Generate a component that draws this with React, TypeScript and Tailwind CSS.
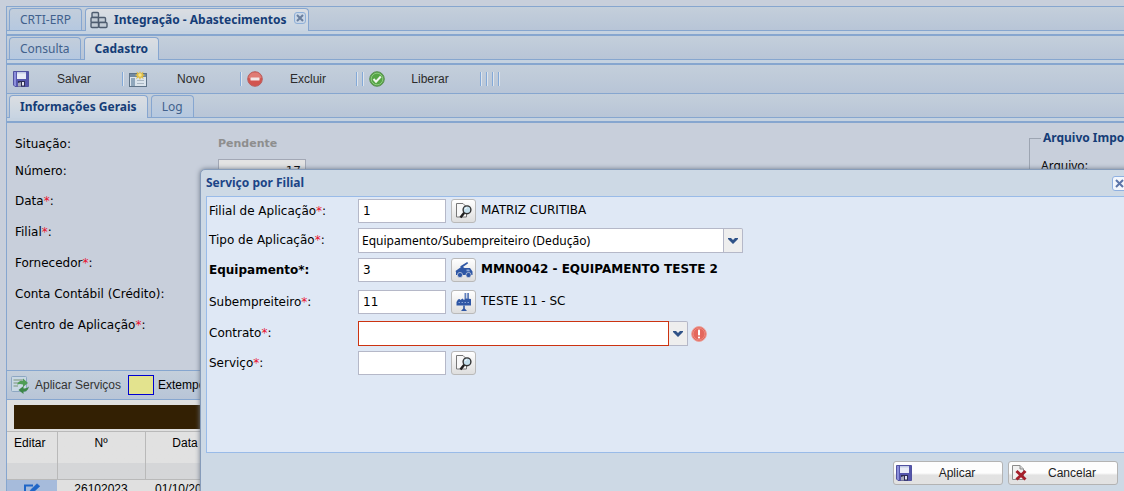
import type { ReactNode } from 'react'

const ui = "font-['Noto_Sans',sans-serif] text-[12px] leading-4"
const form = "font-['DejaVu_Sans',sans-serif] text-[12px] leading-4"
const arial = "font-['Liberation_Sans',sans-serif] text-[12px] leading-4"

function SaveIcon() {
  return (
    <svg width="16" height="16" viewBox="0 0 16 16" className="shrink-0">
      <path d="M0.5 0.5H15.5V15.5H2L0.5 14Z" fill="#5556ac" stroke="#5152a0" />
      <path d="M1 1H3V15H2L1 14Z" fill="#8c8fdb" />
      <rect x="4" y="1" width="9" height="7" fill="#e9ecf7" />
      <rect x="4" y="1" width="9" height="1.5" fill="#c3cbe6" />
      <rect x="5" y="10" width="7" height="5.5" fill="#2c2c52" />
      <path d="M5 15.5V12L8 11V15.5Z" fill="#a5a7ba" />
      <rect x="9" y="11" width="2" height="3.5" fill="#e3e5f2" />
    </svg>
  )
}

function NewIcon() {
  return (
    <svg width="18" height="16" viewBox="0 0 18 16" className="shrink-0">
      <rect x="0.5" y="2.5" width="17" height="13" fill="#dbe4ec" stroke="#5f7387" />
      <rect x="1" y="3" width="16" height="3" fill="#7189a1" />
      <rect x="2" y="7" width="4" height="8" fill="#8fa6bb" />
      <path d="M8 9.5H15M8 12.5H15" stroke="#a9b6c2" />
      <path d="M11 0L12 2.2L14.5 0.6L13.8 3L16 4L13.8 5.2L14.6 8L12 6.6L11 9L9.8 6.6L7 8L8.1 5.2L6 4L8.2 3L7.4 0.6L10 2.2Z" fill="#e0bd45" />
      <circle cx="11" cy="4" r="1.7" fill="#f5e48c" />
    </svg>
  )
}

function DeleteIcon() {
  return (
    <svg width="16" height="16" viewBox="0 0 16 16" className="shrink-0">
      <circle cx="8" cy="8" r="7.3" fill="#d2544f" stroke="#b8605f" />
      <path d="M1.5 7A6.6 6.6 0 0 1 14.5 7Q8 9 1.5 7Z" fill="#e07b74" />
      <rect x="3.5" y="6.5" width="9" height="3" rx="0.5" fill="#f3e8e8" />
    </svg>
  )
}

function CheckIcon() {
  return (
    <svg width="16" height="16" viewBox="0 0 16 16" className="shrink-0">
      <circle cx="8" cy="8" r="7.3" fill="#55a545" stroke="#5d8f56" />
      <circle cx="8" cy="8" r="5.8" fill="none" stroke="#8cc97e" />
      <path d="M4.5 8L7 10.7L11.8 5.5" fill="none" stroke="#f0f5ee" strokeWidth="2" />
    </svg>
  )
}

function CancelIcon() {
  return (
    <svg width="16" height="16" viewBox="0 0 16 16" className="shrink-0">
      <path d="M1.5 0.5H9L12.5 4V14.5H1.5Z" fill="#f1f1f1" stroke="#8c8c8c" />
      <path d="M9 0.5V4H12.5" fill="#d5d5d5" stroke="#8c8c8c" />
      <path d="M5.5 6L14.5 14.5M14.5 6L5.5 14.5" stroke="#a51f2b" strokeWidth="3" />
    </svg>
  )
}

function SearchIcon() {
  return (
    <svg width="16" height="16" viewBox="0 0 16 16">
      <path d="M0.5 0.5H7L10.5 4V14H0.5Z" fill="#f8f8f8" stroke="#777" />
      <path d="M8.8 9L4.5 14.5" stroke="#1f1f1f" strokeWidth="2.4" />
      <circle cx="11" cy="6.8" r="3.9" fill="#c4dfec" stroke="#333" strokeWidth="1.4" />
      <path d="M9 6.2Q9.4 5 11 4.6" fill="none" stroke="#fff" />
    </svg>
  )
}

function TruckIcon() {
  return (
    <svg width="18" height="16" viewBox="0 0 18 16" fill="#2f57a5">
      <path d="M5 4.6L12.2 0L13.2 1.2L7.2 5.4Z" />
      <path d="M0.5 9L4 6.5L6 5H8L9.5 6H15L17.5 9.5V13H1V10Z" />
      <circle cx="5" cy="13" r="2.6" stroke="#eee" strokeWidth="0.6" />
      <circle cx="13.5" cy="13" r="2.6" stroke="#eee" strokeWidth="0.6" />
      <path d="M11.5 7.5H14.2L15 9.3H11.5Z" fill="#8ea9d8" />
    </svg>
  )
}

function FactoryIcon() {
  return (
    <svg width="16" height="18" viewBox="0 0 16 18" fill="#2f57a5">
      <path d="M8.5 0H10.3V7H8.5ZM11.2 0H13V7H11.2Z" opacity="0.75" />
      <path d="M0.5 9L2 6.5L3.5 6L4.5 7L6.5 5.6L8 7L10 5.6L15 6V12.5H0.5Z" />
      <path d="M2.5 9.5H14" stroke="#8ba5d6" strokeDasharray="1.5 1.5" />
      <path d="M7.2 12.5H8.8V15.5L11 18H5L7.2 15.5Z" />
    </svg>
  )
}

function ModuleIcon() {
  return (
    <svg width="18" height="18" viewBox="0 0 18 18" fill="#c3ccd6" stroke="#4e5c6f" strokeWidth="1.4" className="shrink-0">
      <rect x="2" y="1.5" width="6.5" height="5" rx="1" />
      <rect x="1" y="6.5" width="7.5" height="5" rx="1" />
      <rect x="8.5" y="6.5" width="7" height="5" rx="1" />
      <rect x="1" y="11.5" width="7.5" height="5" rx="1" />
      <rect x="9" y="11.5" width="8" height="5" rx="1" />
    </svg>
  )
}

function ApplyIcon() {
  return (
    <svg width="18" height="18" viewBox="0 0 18 18" className="shrink-0">
      <rect x="0.5" y="0.5" width="15" height="15" rx="1" fill="#c9d8e4" stroke="#8da7c2" />
      <path d="M2.5 4H13M2.5 7H8M2.5 10H7" stroke="#7a9478" />
      <path d="M6 8.5Q8 4 12 5V2.5L17 7L12 11V8.5Q9 7.5 6 8.5Z" fill="#4f9d55" />
      <path d="M18 10.5Q16.5 16 12.5 15.5V18L7.5 14L12.5 10V12.5Q15.5 13 18 10.5Z" fill="#3c8747" />
    </svg>
  )
}

function EditIcon() {
  return (
    <svg width="18" height="16" viewBox="0 0 18 16" fill="none" stroke="#1f66c7" strokeWidth="2">
      <path d="M10 2.5H2V14.5H14V9" />
      <path d="M6.5 10L7.5 7L14 0.8L16.8 3.2L10 9.5Z" fill="#1f66c7" strokeWidth="0.6" />
    </svg>
  )
}

function CloseBox({ label }: { label: string }) {
  return (
    <button aria-label={label} className="flex h-3 w-3 shrink-0 items-center justify-center rounded-[3px] border border-[#8fb0d8] bg-[#c9d6e6]">
      <svg width="8" height="8" viewBox="0 0 8 8" stroke="#6a7f9e" strokeWidth="2">
        <path d="M1 1L7 7M7 1L1 7" />
      </svg>
    </button>
  )
}

function Tab({ active, children }: { active?: boolean; children: ReactNode }) {
  return (
    <button
      role="tab"
      aria-selected={!!active}
      className={
        active
          ? 'relative -mb-px flex h-[23px] items-center rounded-t border border-b-0 border-[#86a6d0] bg-linear-to-b from-[#dbdee2] to-[#c7d4e2] px-[10px] font-bold text-[#153d77]'
          : 'flex h-[22px] items-center rounded-t border border-b-0 border-[#86a6d0] bg-linear-to-b from-[#c3cedb] to-[#b5c8e0] px-[10px] text-[#41618c]'
      }
    >
      {children}
    </button>
  )
}

function TabBar({ children }: { children: ReactNode }) {
  return (
    <div className="border-b-2 border-[#86a6cf] bg-[#c5d2e0] pb-[3px]">
      <div role="tablist" className={`${ui} flex h-6 items-end gap-[3px] border-b border-[#86a6cf] bg-linear-to-b from-[#c4cfdb] to-[#b8c5d7] pl-[2px]`}>
        {children}
      </div>
    </div>
  )
}

function ToolButton({ icon, wide, children }: { icon: ReactNode; wide?: boolean; children: ReactNode }) {
  return (
    <button className={`${wide ? 'w-28 pr-[2px]' : 'w-[110px]'} flex h-6 items-center pl-1 text-[#2b2b2b]`}>
      {icon}
      <span className="flex-1 text-center">{children}</span>
    </button>
  )
}

function Separator() {
  return <span className="mr-px ml-[3px] h-[14px] w-[2px] border-r border-l border-r-[#dfe5ec] border-l-[#83a9d8]" />
}

function Label({ text, required, htmlFor }: { text: string; required?: boolean; htmlFor?: string }) {
  return (
    <label htmlFor={htmlFor}>
      {text}
      {required && <span className="text-[#e8112d]">*</span>}:
    </label>
  )
}

const backFields = [
  { label: 'Data', required: true },
  { label: 'Filial', required: true },
  { label: 'Fornecedor', required: true },
  { label: 'Conta Contábil (Crédito)' },
  { label: 'Centro de Aplicação', required: true },
]

const fieldLabel = 'flex h-6 w-[149px] shrink-0 items-center'
const fieldInput = 'h-6 w-[88px] border border-[#b5b8c8] bg-white px-1 outline-none'

function IconButton({ label, children }: { label: string; children: ReactNode }) {
  return (
    <button
      aria-label={label}
      className="mx-[5px] flex h-6 w-[25px] items-center justify-center rounded-[3px] border border-[#b9b9b9] bg-linear-to-b from-white to-[#dedede]"
    >
      {children}
    </button>
  )
}

function Trigger() {
  return (
    <span className="flex h-full w-[19px] items-center justify-center rounded-tr-[2px] border border-l-0 border-[#b5b8c8] bg-[#eeeeee]">
      <svg width="10" height="6" viewBox="0 0 10 6">
        <path d="M0 0H3L5 2L7 0H10V1L5 6L0 1Z" fill="#2f5288" />
      </svg>
    </span>
  )
}

function FooterButton({ icon, children }: { icon: ReactNode; children: ReactNode }) {
  return (
    <button className="flex h-6 w-[110px] items-center rounded-[3px] border border-[#b3b3b3] bg-linear-to-b from-[#fdfdfd] from-50% to-[#e2e2e2] to-60% pl-[2px] text-[#222]">
      {icon}
      <span className="flex-1 text-center">{children}</span>
    </button>
  )
}

function ServiceDialog() {
  return (
    <div
      role="dialog"
      aria-labelledby="dialog-title"
      className="absolute top-[169px] -right-[10px] left-[200px] rounded-t-[5px] border border-[#869cba] bg-[#cdd9e5] px-[5px] pb-2 text-black shadow-[0_0_5px_#6c7788]"
    >
      <div className="flex h-[26px] items-center justify-between pr-px">
        <h2 id="dialog-title" className="font-bold text-[#1c4587]">Serviço por Filial</h2>
        <button aria-label="Fechar" className="flex h-[15px] w-[15px] items-center justify-center rounded-[3px] border border-[#8fb0e0] bg-[#f2f6fc]">
          <svg width="9" height="9" viewBox="0 0 9 9" stroke="#5b74a8" strokeWidth="2">
            <path d="M1 1L8 8M8 1L1 8" />
          </svg>
        </button>
      </div>

      <form className={`${form} border border-[#99bbe8] bg-[#dfe8f5] px-[2px] pt-[2px] pb-[71px]`}>
        <div className="flex h-[29px]">
          <div className={fieldLabel}><Label text="Filial de Aplicação" required htmlFor="filial" /></div>
          <input id="filial" className={fieldInput} defaultValue="1" />
          <IconButton label="Pesquisar filial"><SearchIcon /></IconButton>
          <span className="pt-[3px]">MATRIZ CURITIBA</span>
        </div>
        <div className="flex h-[30px]">
          <div className={fieldLabel}><Label text="Tipo de Aplicação" required htmlFor="tipo" /></div>
          <div className="flex h-[25px]">
            <select id="tipo" className={`${ui} w-[366px] appearance-none border border-[#b5b8c8] bg-white px-[3px] outline-none`}>
              <option>Equipamento/Subempreiteiro (Dedução)</option>
            </select>
            <Trigger />
          </div>
        </div>
        <div className="flex h-8 font-bold">
          <div className={fieldLabel}><label htmlFor="equipamento">Equipamento*:</label></div>
          <input id="equipamento" className={`${fieldInput} font-normal`} defaultValue="3" />
          <IconButton label="Pesquisar equipamento"><TruckIcon /></IconButton>
          <span className="pt-[3px]">MMN0042 - EQUIPAMENTO TESTE 2</span>
        </div>
        <div className="flex h-[31px]">
          <div className={fieldLabel}><Label text="Subempreiteiro" required htmlFor="sub" /></div>
          <input id="sub" className={fieldInput} defaultValue="11" />
          <IconButton label="Pesquisar subempreiteiro"><FactoryIcon /></IconButton>
          <span className="pt-[3px]">TESTE 11 - SC</span>
        </div>
        <div className="flex h-[30px]">
          <div className={fieldLabel}><Label text="Contrato" required htmlFor="contrato" /></div>
          <div className="flex h-[25px] items-center">
            <select id="contrato" aria-invalid="true" className="h-full w-[311px] appearance-none border border-[#cc3311] bg-white px-1 outline-none">
              <option></option>
            </select>
            <Trigger />
            <svg width="16" height="16" viewBox="0 0 16 16" className="ml-[3px]">
              <circle cx="8" cy="8" r="7.4" fill="#e4675c" stroke="#eba39c" />
              <circle cx="8" cy="8" r="5.8" fill="none" stroke="#ee9389" strokeWidth="0.7" />
              <rect x="7" y="3.5" width="2" height="6" rx="0.8" fill="#fff" />
              <rect x="7" y="10.5" width="2" height="2" rx="0.8" fill="#fff" />
            </svg>
          </div>
        </div>
        <div className="flex h-[30px]">
          <div className={fieldLabel}><Label text="Serviço" required htmlFor="servico" /></div>
          <input id="servico" className={fieldInput} />
          <IconButton label="Pesquisar serviço"><SearchIcon /></IconButton>
        </div>
      </form>

      <div className={`${arial} flex justify-end gap-[5px] pt-2 pr-[10px]`}>
        <FooterButton icon={<SaveIcon />}>Aplicar</FooterButton>
        <FooterButton icon={<CancelIcon />}>Cancelar</FooterButton>
      </div>
    </div>
  )
}

export default function App() {
  return (
    <div className={`${ui} relative h-screen overflow-hidden bg-[#c8cfdb] pt-[6px] pl-[6px] text-black`}>
      <div className="border-t border-l border-[#86a6cf]">
        <TabBar>
          <Tab>CRTI-ERP</Tab>
          <Tab active>
            <span className="-ml-[6px] flex items-center gap-[6px]">
              <ModuleIcon />
              Integração - Abastecimentos
            </span>
            <span className="-mt-1 -mr-2 ml-2"><CloseBox label="Fechar aba" /></span>
          </Tab>
        </TabBar>
        <TabBar>
          <Tab>Consulta</Tab>
          <Tab active>Cadastro</Tab>
        </TabBar>

        <div className={`${arial} flex h-[29px] items-center border-b border-[#86a6cf] bg-linear-to-b from-[#c4cfdb] to-[#b8c5d7] pl-[2px]`}>
          <ToolButton icon={<SaveIcon />}>Salvar</ToolButton>
          <Separator />
          <ToolButton wide icon={<NewIcon />}>Novo</ToolButton>
          <Separator />
          <ToolButton icon={<DeleteIcon />}>Excluir</ToolButton>
          <Separator />
          <Separator />
          <ToolButton wide icon={<CheckIcon />}>Liberar</ToolButton>
          <Separator />
          <Separator />
          <Separator />
          <Separator />
        </div>

        <TabBar>
          <Tab active>Informações Gerais</Tab>
          <Tab>Log</Tab>
        </TabBar>

        <div className="flex h-[248px] justify-between border-b border-[#86a6cf] pt-[7px] pl-2">
          <div className={form}>
            <div className="flex h-[27px] items-center">
              <span className="w-[203px]">Situação:</span>
              <span className="text-[11px] font-bold text-[#8e8e8e]">Pendente</span>
            </div>
            <div className="flex h-7 items-center">
              <div className="w-[203px]"><Label text="Número" htmlFor="numero" /></div>
              <input id="numero" readOnly defaultValue="17" className="h-6 w-[88px] border border-[#a3a8b5] bg-[#e3e3e3] px-1 text-right" />
            </div>
            {backFields.map((f) => (
              <div key={f.label} className="flex h-[31px] items-center">
                <Label text={f.label} required={f.required} />
              </div>
            ))}
          </div>
          <fieldset className="h-[200px] w-[95px] min-w-0 border border-r-0 border-[#9da5b2] pl-[11px] whitespace-nowrap">
            <legend className="px-[2px] font-bold text-[#153d77]">Arquivo Importado</legend>
            <p className="pt-3">Arquivo:</p>
          </fieldset>
        </div>

        <div className={`${arial} flex h-[29px] items-center border-b border-[#86a6cf] bg-linear-to-b from-[#c4cfdb] to-[#b8c5d7] pl-1`}>
          <button className="flex items-center gap-[6px] text-[#333]">
            <ApplyIcon />
            Aplicar Serviços
          </button>
          <span className="mr-1 ml-[7px] h-5 w-[26px] border border-[#0000d0] bg-[#e3e38e]" />
          Extemporâneo
        </div>

        <div className={`${arial} bg-[#e0e0e0]`}>
          <div className="h-8 border-b border-[#b9b9b9] pt-[5px] pl-[7px]">
            <div className="h-6 bg-[#332003]" />
          </div>
          <table className="w-full table-fixed border-collapse">
            <colgroup>
              <col className="w-[50px]" />
              <col className="w-[88px]" />
              <col className="w-[80px]" />
              <col />
            </colgroup>
            <thead>
              <tr className="h-[47px] bg-linear-to-b from-[#e1e1e1] from-65% to-[#d5d6d8] to-66% align-top">
                <th className="border-r border-b border-[#b9b9b9] pt-[3px] pr-1 font-normal">Editar</th>
                <th className="border-r border-b border-[#b9b9b9] pt-[3px] font-normal">Nº</th>
                <th className="border-r border-b border-[#b9b9b9] pt-[3px] font-normal">Data</th>
                <th className="border-b border-[#b9b9b9]" />
              </tr>
            </thead>
            <tbody>
              <tr className="h-6 align-top">
                <td className="bg-[#a6bbdb] pt-[3px] pl-4">
                  <button aria-label="Editar"><EditIcon /></button>
                </td>
                <td className="pt-px text-center">26102023</td>
                <td className="pt-px text-center">01/10/2023</td>
                <td />
              </tr>
            </tbody>
          </table>
        </div>
      </div>

      <ServiceDialog />
    </div>
  )
}
